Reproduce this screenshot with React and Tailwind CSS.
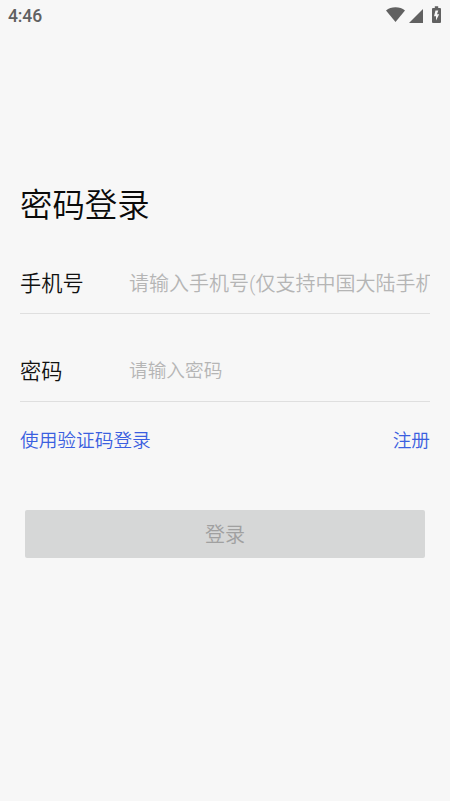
import React from "react";

// Android style status bar
function StatusBar() {
	return (
		<div className="flex h-8 items-center justify-between pl-2 pr-[9px] text-[#616161]">
			<span className="pt-px font-['Roboto',sans-serif] text-[17.500px] font-medium tracking-[-0.1px]">4:46</span>
			<div className="flex items-center pb-[3px]">
				<svg className="h-[15px] w-[20px]" viewBox="0 0 20 15" fill="currentColor">
					<path d="M9.500 15 0 3.400C2.700 1.300 5.700.3 9.500.3s6.800 1 9.500 3.100z" />
				</svg>
				<svg className="ml-[3px] mt-[2px] h-[14px] w-[14px]" viewBox="0 0 14 14" fill="currentColor">
					<path d="M0 14 14 0v14z" />
				</svg>
				<svg className="ml-[9px] h-[17px] w-[9px]" viewBox="0 0 9 17" fill="currentColor">
					<path fillRule="evenodd" d="M2.800.3h3.400v1.700H8q1 0 1 1V16q0 1-1 1H1q-1 0-1-1V3q0-1 1-1h1.800zM3.500 4.500 2 10.200h2V14.500L7.200 8.300H5L6.300 4.500z" />
				</svg>
			</div>
		</div>
	);
}

function Field({ label, placeholder, type = "text", inputClass }) {
	return (
		<label className="flex h-[62px] items-center border-b border-[#dfdfdf] pt-[2px]">
			<span className="w-[109px] shrink-0 text-[21.200px] text-[#111]">{label}</span>
			<input
				type={type}
				placeholder={placeholder}
				className={`min-w-0 flex-1 bg-transparent outline-none placeholder:text-[#b5b5b5] ${inputClass}`}
			/>
		</label>
	);
}

export default function App() {
	return (
		<div className="h-[801px] w-[450px] overflow-hidden bg-[#f7f7f7] font-['Roboto','Noto_Sans_CJK_SC',sans-serif] font-[350]">
			<StatusBar />
			<main className="px-5 pt-[150px]">
				<h1 className="h-[48px] text-[32.400px] font-[350] leading-[48px] text-[#0a0a0a]">密码登录</h1>
				<div className="mt-[22px] flex flex-col gap-[26px]">
					<Field label="手机号" placeholder="请输入手机号(仅支持中国大陆手机号)" inputClass="text-[20px]" />
					<Field label="密码" placeholder="请输入密码" type="password" inputClass="text-[18.700px]" />
				</div>
				<div className="mt-[25px] flex justify-between text-[18.700px] leading-7 text-[#3b5fe0]">
					<a href="#code">使用验证码登录</a>
					<a href="#register">注册</a>
				</div>
				<button disabled className="mx-[5px] mt-[55px] block h-[48px] w-[400px] rounded-[2px] bg-[#d6d7d7] pt-[2px] text-[20px] text-[#a0a0a0]">
					登录
				</button>
			</main>
		</div>
	);
}
